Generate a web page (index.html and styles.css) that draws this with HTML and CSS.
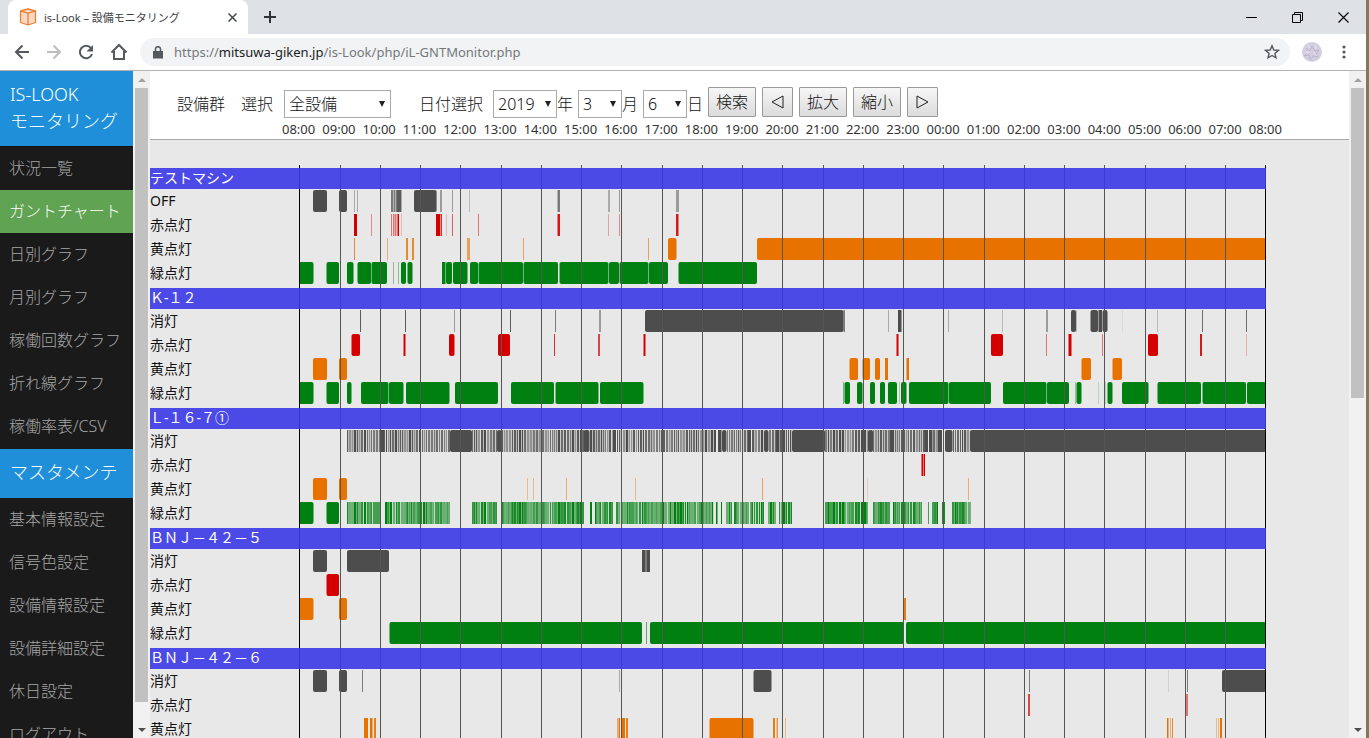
FILE: index.html
```html
<!DOCTYPE html>
<html lang="ja">
<head>
<meta charset="UTF-8">
<meta name="viewport" content="width=device-width, initial-scale=1.0">
<title>is-Look – 設備モニタリング</title>
<link rel="stylesheet" href="styles.css">
</head>
<body>
<div class="window">
  <div class="tabstrip">
    <div class="tab">
      <svg class="favicon" width="18" height="18" viewBox="0 0 18 18" fill="#fbd9c5" stroke="#f08030" stroke-width="1.3" stroke-linejoin="round"><path d="M1.5 3L9 1l7.500 2v11.500L9 17l-7.500-2.500zM1.500 3L9 5l7.500-2M9 5v12"/></svg>
      <span class="tab-title">is-Look – 設備モニタリング</span>
      <button class="icon-btn tab-close" aria-label="タブを閉じる"><svg width="9" height="9" viewBox="0 0 9 9" stroke="#45494d" stroke-width="1.5"><path d="M.5 .5l8 8M8.500 .5l-8 8"/></svg></button>
    </div>
    <button class="icon-btn new-tab" aria-label="新しいタブ"><svg width="12" height="12" viewBox="0 0 12 12" stroke="#303438" stroke-width="2"><path d="M6 0v12M0 6h12"/></svg></button>
    <div class="win-buttons">
      <button class="icon-btn" aria-label="最小化"><svg width="11" height="11" viewBox="0 0 11 11" stroke="#000"><path d="M0 5.500h11"/></svg></button>
      <button class="icon-btn" aria-label="元に戻す"><svg width="11" height="11" viewBox="0 0 11 11" fill="none" stroke="#000"><path d="M.5 2.500h8v8h-8zM2.500 2.500v-2h8v8h-2"/></svg></button>
      <button class="icon-btn" aria-label="閉じる"><svg width="11" height="11" viewBox="0 0 11 11" stroke="#000" stroke-width="1.200"><path d="M.5 .5l10 10M10.500 .5l-10 10"/></svg></button>
    </div>
  </div>
  <div class="toolbar">
    <div class="nav-buttons">
      <button class="icon-btn" aria-label="戻る"><svg width="16" height="16" viewBox="0 0 16 16" fill="none" stroke="#55595e" stroke-width="2"><path d="M15 8H2M8.500 1.500L2 8l6.500 6.500"/></svg></button>
      <button class="icon-btn" aria-label="進む"><svg width="16" height="16" viewBox="0 0 16 16" fill="none" stroke="#bbbdc0" stroke-width="2"><path d="M1 8h13M7.500 1.500L14 8l-6.500 6.500"/></svg></button>
      <button class="icon-btn" aria-label="再読み込み"><svg width="16" height="16" viewBox="0 0 16 16" fill="none" stroke="#55595e" stroke-width="2"><path d="M13 4.200A6.200 6.200 0 1 0 14 10"/><path d="M15 1v6.500H8.500z" fill="#55595e" stroke="none"/></svg></button>
      <button class="icon-btn" aria-label="ホーム"><svg width="18" height="18" viewBox="0 0 18 18" fill="none" stroke="#55595e" stroke-width="2"><path d="M1.500 9.500L9 2l7.500 7.500M4 8v8h10V8"/></svg></button>
    </div>
    <div class="omnibox">
      <svg width="10" height="13" viewBox="0 0 10 13"><path d="M0 5h10v7.500H0z" fill="#55595e"/><path d="M2.500 5V3a2.500 2.300 0 0 1 5 0v2" fill="none" stroke="#55595e" stroke-width="1.500"/></svg>
      <span class="url">https://<b>mitsuwa-giken.jp</b>/is-Look/php/iL-GNTMonitor.php</span>
      <svg width="16" height="16" viewBox="0 0 16 16" fill="none" stroke="#55595e" stroke-width="1.400"><path d="M8 1.800l1.800 4.200 4.600.4-3.500 3 1.100 4.500L8 11.500l-4 2.400 1.100-4.500-3.500-3 4.600-.4z"/></svg>
    </div>
    <svg class="avatar" width="20" height="20" viewBox="0 0 20 20"><circle cx="10" cy="10" r="10" fill="#d3cedf"/><path d="M4 6l4 3 2-5 3 5 4-1-3 4 2 3-5-1-3 4-1-5-5 1 4-4" fill="none" stroke="#bdb5cf"/><path d="M6 3l2 3M11 10l4 4M3 11l5-1M13 3l1 4" stroke="#e8e5ee"/></svg>
    <button class="icon-btn more" aria-label="メニュー"><svg width="4" height="14" viewBox="0 0 4 14" fill="#55595e"><circle cx="2" cy="2" r="1.600"/><circle cx="2" cy="7" r="1.600"/><circle cx="2" cy="12" r="1.600"/></svg></button>
  </div>

  <div class="page">
    <nav class="sidebar">
      <h2 class="menu-head tall">IS-LOOK<br>モニタリング</h2>
      <a href="#">状況一覧</a>
      <a href="#" class="active">ガントチャート</a>
      <a href="#">日別グラフ</a>
      <a href="#">月別グラフ</a>
      <a href="#">稼働回数グラフ</a>
      <a href="#">折れ線グラフ</a>
      <a href="#">稼働率表/CSV</a>
      <h2 class="menu-head">マスタメンテ</h2>
      <a href="#">基本情報設定</a>
      <a href="#">信号色設定</a>
      <a href="#">設備情報設定</a>
      <a href="#">設備詳細設定</a>
      <a href="#">休日設定</a>
      <a href="#">ログアウト</a>
    </nav>
    <div class="scrollbar"><i class="up"></i><div class="track"><div class="thumb long"></div></div><i class="down"></i></div>

    <main class="content">
      <header class="head">
        <form class="controls" onsubmit="return false">
          <label for="group">設備群　選択</label>
          <span class="select group"><select id="group"><option>全設備</option></select></span>
          <label for="year">日付選択</label>
          <span class="select year"><select id="year"><option>2019</option></select></span>
          <label for="year">年</label>
          <span class="select"><select id="month"><option>3</option></select></span>
          <label for="month">月</label>
          <span class="select"><select id="day"><option>6</option></select></span>
          <label for="day">日</label>
          <div class="buttons">
            <button>検索</button>
            <button aria-label="前へ"><svg width="13" height="14" viewBox="0 0 13 14" fill="none" stroke="#222"><path d="M12 1v12L1 7z"/></svg></button>
            <button>拡大</button>
            <button>縮小</button>
            <button aria-label="次へ"><svg width="13" height="14" viewBox="0 0 13 14" fill="none" stroke="#222"><path d="M1 1v12l11-6z"/></svg></button>
          </div>
        </form>
        <div class="hours" id="hours"></div>
      </header>
      <div class="chart" id="chart"></div>
    </main>
    <div class="scrollbar"><i class="up"></i><div class="track"><div class="thumb half"></div></div><i class="down"></i></div>
  </div>
</div>
<script src="gantt.js"></script>
</body>
</html>
```
FILE: styles.css
```css
* { box-sizing: border-box; }
body { margin: 0; background: #857660; color: #111; font-family: "Noto Sans", "Noto Sans CJK JP", sans-serif; font-size: 14px; }
button, select { font: inherit; color: inherit; }
.window { height: 100vh; margin-right: 3px; display: flex; flex-direction: column; overflow: hidden; background: #fff; }
.icon-btn { border: 0; padding: 0; background: none; display: flex; align-items: center; justify-content: center; }

/* ブラウザ枠 */
.tabstrip { flex: none; height: 34px; padding-left: 8px; background: #dee1e6; display: flex; align-items: center; }
.tab { width: 240px; height: 34px; padding: 0 10px 0 11px; background: #fff; border-radius: 8px 8px 0 0; display: flex; align-items: center; }
.tab-title { flex: 1; margin-left: 7px; font-size: 11px; color: #3c4043; white-space: nowrap; }
.tab-close { width: 12px; height: 12px; }
.new-tab { width: 44px; height: 34px; }
.win-buttons { margin-left: auto; display: flex; }
.win-buttons .icon-btn { width: 46px; height: 28px; }
.toolbar { flex: none; height: 37px; border-bottom: 1px solid #b3b3b3; display: flex; align-items: center; background: #fff; }
.nav-buttons { display: flex; gap: 16px; margin-left: 14px; }
.omnibox { flex: 1; height: 28px; margin-left: 12px; padding: 0 10px 0 13px; border-radius: 14px; background: #f1f3f4; display: flex; align-items: center; }
.url { flex: 1; margin-left: 11px; font-size: 13px; color: #74787c; white-space: nowrap; }
.url b { font-weight: normal; color: #202124; }
.avatar { margin-left: 12px; }
.more { width: 44px; }

/* メニュー */
.page { flex: 1; min-height: 0; display: flex; }
.sidebar { flex: none; width: 133px; overflow: hidden; background: #1a1a1a; }
.sidebar a { display: block; height: 43px; padding-left: 9px; line-height: 43px; font-size: 16px; font-weight: 300; color: #a6a6a6; text-decoration: none; white-space: nowrap; }
.sidebar a.active { background: #60a353; color: #fff; }
.menu-head { margin: 0; height: 50px; padding: 10px; border-top: 1px solid #1a1a1a; background: #1e8fd8; color: #fff; font-size: 18px; font-weight: 300; line-height: 27px; white-space: nowrap; }
.menu-head.tall { height: 76px; border-top: 0; border-bottom: 1px solid #111; }

/* スクロールバー */
.scrollbar { flex: none; width: 17px; background: #f1f1f1; display: flex; flex-direction: column; align-items: center; }
.scrollbar i { height: 17px; display: flex; align-items: center; }
.scrollbar i::after { content: ""; border: 4px solid transparent; }
.scrollbar .up::after { border-top: 0; border-bottom-color: #a3a3a3; }
.scrollbar .down::after { border-bottom: 0; border-top-color: #505050; }
.track { flex: 1; width: 13px; }
.thumb { background: #c1c1c1; }
.long { height: 97%; }
.half { height: 49%; }

/* 検索条件 */
.content { flex: 1; min-width: 0; overflow: hidden; background: #e8e8e8; }
.head { height: 69px; padding-top: 16px; background: #fff; border-bottom: 1px solid #aaa; }
.controls { height: 32px; padding-left: 27px; display: flex; align-items: center; font-size: 16px; font-weight: 300; white-space: nowrap; }
.select { position: relative; align-self: flex-end; width: 44px; height: 29px; }
.select select { width: 100%; height: 28px; padding: 0 4px; border: 1px solid #a9a9a9; border-radius: 0; background: #fff; appearance: none; }
.select::after { content: ""; position: absolute; right: 6px; top: 11px; border: 3px solid transparent; border-top: 6px solid #222; border-bottom: 0; pointer-events: none; }
.select.group { width: 107px; margin: 0 28px 0 11px; }
.select.year { width: 64px; margin-left: 10px; }
.controls label { min-width: 21px; }
.controls label[for="day"] { min-width: 16px; }
.buttons { align-self: flex-start; display: flex; gap: 6px; margin-left: 5px; }
.buttons button { height: 30px; padding: 0 7px; border: 1px solid #999; border-radius: 1px; background: linear-gradient(#f6f6f6, #dcdcdc); line-height: 26px; display: flex; align-items: center; }
.buttons svg { margin: 0 1px; }
.hours { width: 1000px; margin: 1px 0 0 132px; display: flex; justify-content: space-between; font-size: 13px; line-height: 18px; color: #333; }

/* チャート */
.chart { position: relative; width: 1116px; padding-top: 28px; }
.machine { margin: 0 0 3px; font-size: 14px; }
.machine h3 { position: relative; z-index: 1; margin: 0; height: 21px; background: rgba(58, 56, 230, .9); color: #fff; font-size: 14px; font-weight: normal; line-height: 20px; }
.lane { display: grid; grid-template-columns: 149px 967px; height: 24px; line-height: 24px; }
.lane svg { display: block; }
.grid { position: absolute; left: 149px; top: 25px; width: 967px; height: calc(100% - 25px); }
.off { fill: #4d4d4d; }
.red { fill: #d40000; }
.yellow { fill: #e87200; }
.green { fill: #008010; }
```
FILE: gantt.js
```js
const START = 299;      // 08:00 の位置
const HOUR = 40.25;     // 1時間の幅
const WIDTH = 967;
const LANES = ['off', 'red', 'yellow', 'green'];

// a-b: 点灯区間  @n: 濃さ  a~b: 短い点滅が続く区間
const machines = [
  { name: 'テストマシン', off: 'OFF', lanes: [
    '313-327 339-347 354-355@.4 357-358@.4 391-393@.7 393.5-395@.7 395.5-397@.7 397-401@.9 401-402@.4 414-436.5 436.5-437@.4 440-442@.5 452-453@.5 469-470@.3 557.5-560@.7 608-610@.4 619-620@.5 676-679@.5',
    '354-357 371-372@.4 391-392@.5 393-394@.5 394.5-396@.5 396.5-398@.5 398-399 401-402@.2 436-440 440.5-442@.8 446-447@.2 452-453@.6 478-479@.5 557.5-560@.9 608-609@.3 619-620@.4 676-678.5@.9',
    '354-355@.8 387-388@.5 406-408@.8 412-414@.8 467-470@.6 523-524@.6 648-649@.6 668-676.5 757-1266',
    '299-313.5 326.5-339 347-353.5 357.5-371 371.5-387 393-394@.4 398-399@.4 401-406 407.5-412.5 442-445.5 446-452 453-467.5 470-478 478.5-523 523.5-558 559.5-608.5 609-619 619.5-648.5 649-668 678.5-757' ] },
  { name: 'Ｋ-１２', off: '消灯', lanes: [
    '360-361@.9 405-406@.9 454-455@.5 510-511@.9 555-556@.7 599-601@.5 645-843.5 843.5-845@.7 888-889@.4 898-901.5 948-949@.4 1002-1003@.3 1046-1048@.5 1071-1076 1076-1077@.3 1090.5-1098 1098.5-1102 1102.5-1107.5 1122-1123@.08 1157-1158@.3 1202-1203@.8 1246-1247@.8',
    '351.5-360 403.5-405.5 449-454.5 498-510 554-555@.8 598-600@.7 643.5-645.5 896.5-898.5 991-1003 1046-1047@.5 1068.5-1071.5 1102-1103@.5 1148-1158 1200-1202@.9 1246-1247@.25',
    '313-327 339-347 849.5-858 862.5-870 875-880 885-888 906.5-909 1081.5-1091 1112.5-1122',
    '299-313.5 326.5-339 347-351.5 361-388.5 389-403.5 406-449.5 455-498 511-554 555.5-598.5 600-643.5 843-844@.5 844.5-850 857-862.5 870-875 880-885 888-897 899-900@.3 901-906.5 909-948.5 949-991 1003-1046.5 1047-1069 1075-1076@.4 1076.5-1081.5 1098-1099@.2 1105-1106@.2 1107.5-1112.5 1122-1148.5 1157.5-1201 1202.5-1246 1247-1266' ] },
  { name: 'Ｌ-１６-７①', off: '消灯', lanes: [
    '347~381 380.5-384 384~450 450-472 472~497 497-501.5 501~584 583.5-589.5 590~612 612.5-616 617~714 714-716 718-721.5 722-726.5 727~748 748-751 752~764 764-768.5 769~776 776-779.5 780~792 792-825 825~868 868-873 873~890 890-893 893~925 925-928 929-932.5 933~938 938-942 945-952.5 953~970 970-1266',
    '921.5-923 923.5-925',
    '313-327 339-347 527-528@.4 533-534@.4 566-567@.5 635-636@.4 762-763@.6 867-868@.2 968-969@.5',
    '299-313.5 326.5-339 347~380 385~450 472~497 501~584 590~592 595~613 616~714 716~718 721~722 726~732 734~749 750~764 768~776 779~792 825~868 873~890 893~922 928~929 932~938 942-945@.9 952~971' ] },
  { name: 'ＢＮＪ－４２－５', off: '消灯', lanes: [
    '313-327 347-389 642-645.5 645.5-647@.7 647-650',
    '326.5-339',
    '299-313.5 339-347 904-906@.9',
    '389.5-642 646-647@.6 650-904 906-1266' ] },
  { name: 'ＢＮＪ－４２－６', off: '消灯', lanes: [
    '313-327 339-347 362-363@.7 619-620@.4 753.5-771.5 1029-1030@.7 1168-1169@.15 1187-1188@.7 1222-1266',
    '1028-1030@.7 1186-1188@.5',
    '364-368 370-372.5 374-376@.9 617-618@.5 618.5-620 621-625 626-628@.9 709.5-753.5 773-775@.9 776.5-778@.7 785-786@.4 1167-1168.5 1170-1171@.5 1172-1173@.8 1216-1217@.4 1218-1219@.4 1220-1222',
    '299-313.5 326.5-339 347-362' ] }
];

function rect(a, b, alpha) {
  const w = b - a;
  return `<rect x="${a - START}" y="1" width="${w}" height="22" rx="${w > 4 ? 2 : 0}" opacity="${alpha}"/>`;
}

// 点滅区間を細い線の並びにする
function pulses(a, b, dense) {
  let out = '';
  let n = Math.round(a);
  for (let x = a; x < b;) {
    n = (n * 73 + 41) % 997;
    const w = Math.min(b - x, n % 2 === 0 ? 2 : 1);
    const gap = Math.min(b, x + w + 1);
    out += rect(x, x + w, [1, .7, .9, .55, .8][n % 5]);
    if (gap > x + w) out += rect(x + w, gap, dense ? [.5, .15, .7][n % 3] : [.3, .1, .2][n % 3]);
    x += w + 1;
  }
  return out;
}

function lane(spec, kind) {
  const bars = spec.split(' ').map(s => {
    const [range, alpha = 1] = s.split('@');
    if (range.includes('~')) {
      const [a, b] = range.split('~').map(Number);
      return pulses(a, b, kind === 'green');
    }
    const [a, b] = range.split('-').map(Number);
    return rect(a, b, alpha);
  });
  return `<svg class="${kind}" width="${WIDTH}" height="24">${bars.join('')}</svg>`;
}

let html = '';
for (const m of machines) {
  const labels = [m.off, '赤点灯', '黄点灯', '緑点灯'];
  html += `<section class="machine"><h3>${m.name}</h3>`;
  m.lanes.forEach((spec, i) => {
    html += `<div class="lane"><span>${labels[i]}</span>${lane(spec, LANES[i])}</div>`;
  });
  html += '</section>';
}

// 1時間ごとの縦線と時刻
let lines = '';
let hours = '';
for (let i = 0; i <= 24; i++) {
  const edge = i === 0 || i === 24;
  lines += `<rect x="${Math.round(HOUR * i + .4)}" width="1" height="100%" fill="${edge ? '#000' : '#555'}"/>`;
  hours += `<span>${String((8 + i) % 24).padStart(2, '0')}:00</span>`;
}
document.getElementById('chart').innerHTML = html + `<svg class="grid">${lines}</svg>`;
document.getElementById('hours').innerHTML = hours;
```
